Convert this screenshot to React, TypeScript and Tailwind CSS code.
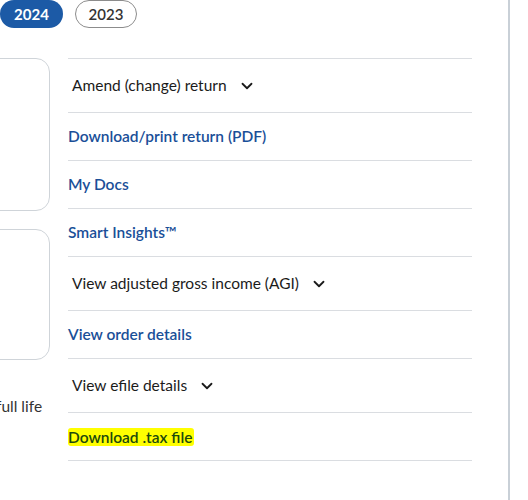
import { ChevronDown } from 'lucide-react';

const font = { fontFamily: '"Lato", "Noto Sans", sans-serif' };

type Row = { label: string; kind: 'menu' | 'link' | 'marked' };

const rows: Row[] = [
  { label: 'Amend (change) return', kind: 'menu' },
  { label: 'Download/print return (PDF)', kind: 'link' },
  { label: 'My Docs', kind: 'link' },
  { label: 'Smart Insights™', kind: 'link' },
  { label: 'View adjusted gross income (AGI)', kind: 'menu' },
  { label: 'View order details', kind: 'link' },
  { label: 'View efile details', kind: 'menu' },
  { label: 'Download .tax file', kind: 'marked' },
];

function ListRow({ row }: { row: Row }) {
  if (row.kind === 'menu') {
    return (
      <div className="h-[54px] flex items-center gap-[11px] pl-1 border-b border-[#dadde1] text-[15.5px] text-[#1b1b1b]">
        <span>{row.label}</span>
        <ChevronDown className="w-[18px] h-[18px] text-[#1b1b1b]" strokeWidth={2.4} />
      </div>
    );
  }
  return (
    <div className="h-[48px] flex items-center border-b border-[#dadde1] text-[15.5px] font-semibold">
      {row.kind === 'marked' ? (
        <span className="bg-[#ffff00] text-[#1c4a0c] rounded-[3px] pr-[2px] leading-[18px]">{row.label}</span>
      ) : (
        <span className="text-[#1a4f98]">{row.label}</span>
      )}
    </div>
  );
}

export default function App() {
  return (
    <div className="w-[528px] h-[500px] bg-white overflow-hidden" style={font}>
      <div className="w-[510px] h-full border-r-2 border-[#c9d0d7]">
        {/* Year tabs */}
        <div className="flex gap-[12px] h-[28px]">
          <button className="w-[63px] h-[28px] rounded-full bg-[#1c5aa6] text-white text-[15px] font-bold">
            2024
          </button>
          <button className="w-[62px] h-[28px] rounded-full border border-[#8c8c8c] bg-white text-[#333] text-[15px] font-semibold">
            2023
          </button>
        </div>

        <div className="flex gap-[18px] mt-[30px]">
          {/* Left column, cut off by the viewport */}
          <div className="w-[50px] shrink-0 overflow-hidden">
            <div className="ml-[-30px] w-[80px] h-[153px] rounded-[14px] border border-[#cfd4d9]" />
            <div className="ml-[-30px] w-[80px] h-[131px] mt-[18px] rounded-[14px] border border-[#cfd4d9]" />
            <p className="ml-[-4px] mt-[35px] text-[15.5px] text-[#333] whitespace-nowrap">full life</p>
          </div>

          {/* Actions list */}
          <div className="w-[404px] border-t border-[#dadde1]">
            {rows.map((row) => (
              <ListRow key={row.label} row={row} />
            ))}
          </div>
        </div>
      </div>
    </div>
  );
}
